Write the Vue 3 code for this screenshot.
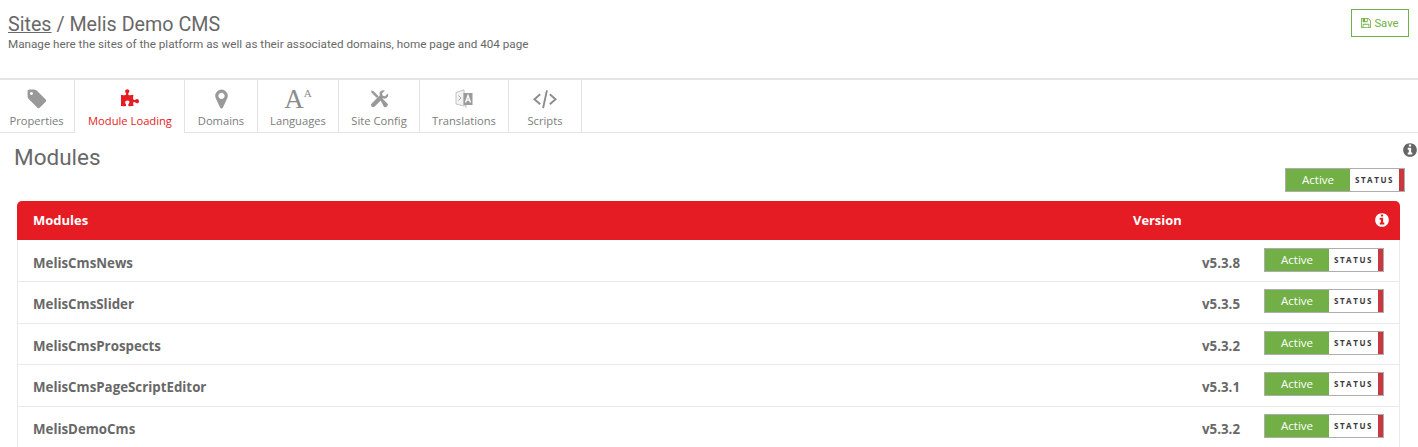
<script setup>
const INFO = 'M1024 1376v-160q0-14-9-23t-23-9h-96v-512q0-14-9-23t-23-9h-320q-14 0-23 9t-9 23v160q0 14 9 23t23 9h96v320h-96q-14 0-23 9t-9 23v160q0 14 9 23t23 9h448q14 0 23-9t9-23zm-128-896v-160q0-14-9-23t-23-9h-192q-14 0-23 9t-9 23v160q0 14 9 23t23 9h192q14 0 23-9t9-23zm640 416q0 209-103 385.5t-279.5 279.5-385.5 103-385.5-103-279.5-279.5-103-385.5 103-385.5 279.5-279.5 385.5-103 385.5 103 279.5 279.5 103 385.5z'
const tabs = [
  { key: 'tag', label: 'Properties', width: 75 },
  { key: 'puzzle', label: 'Module Loading', width: 110, active: true },
  { key: 'marker', label: 'Domains', width: 73 },
  { key: 'lang', label: 'Languages', width: 81 },
  { key: 'tools', label: 'Site Config', width: 81 },
  { key: 'trans', label: 'Translations', width: 89 },
  { key: 'code', label: 'Scripts', width: 73 },
]
const rows = [
  { name: 'MelisCmsNews', version: 'v5.3.8' },
  { name: 'MelisCmsSlider', version: 'v5.3.5' },
  { name: 'MelisCmsProspects', version: 'v5.3.2' },
  { name: 'MelisCmsPageScriptEditor', version: 'v5.3.1' },
  { name: 'MelisDemoCms', version: 'v5.3.2' },
]
</script>

<template>
  <div class="page">
    <header class="head">
      <div>
        <h1 class="title"><a class="crumb">Sites</a> / Melis Demo CMS</h1>
        <p class="sub">Manage here the sites of the platform as well as their associated domains, home page and 404 page</p>
      </div>
      <button class="save">
        <svg class="save-ic" viewBox="0 0 1536 1792"><path d="M384 1536h768v-384h-768v384zm896 0h128v-896q0-14-10-38.5t-20-34.5l-281-281q-10-10-34-20t-39-10v416q0 40-28 68t-68 28h-576q-40 0-68-28t-28-68v-416h-128v1280h128v-416q0-40 28-68t68-28h832q40 0 68 28t28 68v416zm-384-928v-320q0-13-9.500-22.500t-22.500-9.500h-192q-13 0-22.500 9.500t-9.500 22.500v320q0 13 9.500 22.500t22.500 9.500h192q13 0 22.500-9.500t9.500-22.500zm640 32v928q0 40-28 68t-68 28h-1344q-40 0-68-28t-28-68v-1344q0-40 28-68t68-28h928q40 0 88 20t76 48l280 280q28 28 48 76t20 88z"/></svg>
        Save
      </button>
    </header>

    <nav class="tabs">
      <div v-for="t in tabs" :key="t.key" class="tab" :class="{ on: t.active }" :style="{ width: t.width + 'px' }">
        <span class="ic">
          <svg v-if="t.key === 'tag'" width="20" height="22" viewBox="0 0 1536 1792"><path d="M448 448q0-53-37.500-90.500t-90.500-37.500-90.500 37.500-37.500 90.500 37.500 90.500 90.500 37.500 90.500-37.500 37.500-90.500zm1067 576q0 53-37 90l-491 492q-39 37-91 37-53 0-90-37l-715-716q-38-37-64.500-101t-26.500-117v-416q0-52 38-90t90-38h416q53 0 117 26.500t102 64.500l715 714q37 39 37 91z"/></svg>
          <svg v-else-if="t.key === 'puzzle'" width="18" height="20" viewBox="0 0 1664 1792"><path d="M1664 1098q0 81-44.500 135t-123.500 54q-41 0-77.500-17.500t-59-38-56.500-38-71-17.500q-110 0-110 124 0 39 16 115t15 115v5q-22 0-33 1-34 3-97.500 11.500t-115.500 13.500-98 5q-61 0-103-26.500t-42-83.500q0-37 17.500-71t38-56.500 38-59 17.500-77.500q0-79-54-123.500t-135-44.500q-84 0-143 45.500t-59 127.500q0 43 15 83t33.500 64.500 33.500 53 15 50.500q0 45-46 89-37 35-117 35-95 0-245-24-9-2-27.500-4t-27.500-4l-13-2q-1 0-3-1-2 0-2-1v-1024q2 1 17.500 3.500t34 5 21.500 3.500q150 24 245 24 80 0 117-35 46-44 46-89 0-22-15-50.500t-33.500-53-33.500-64.500-15-83q0-82 59-127.500t144-45.500q80 0 134 44.500t54 123.500q0 41-17.500 77.500t-38 59-38 56.500-17.500 71q0 57 42 83.500t103 26.500q64 0 180-15t163-17v2q-1 2-3.500 17.500t-5 34-3.500 21.500q-24 150-24 245 0 80 35 117 44 46 89 46 22 0 50.500-15t53-33.500 64.500-33.500 83-15q82 0 127.500 59t45.500 143z"/></svg>
          <svg v-else-if="t.key === 'marker'" width="13" height="22" viewBox="0 0 1024 1792"><path d="M768 640q0-106-75-181t-181-75-181 75-75 181 75 181 181 75 181-75 75-181zm256 0q0 109-33 179l-364 774q-16 33-47.500 52t-67.500 19-67.500-19-46.500-52l-365-774q-33-70-33-179 0-212 150-362t362-150 362 150 150 362z"/></svg>
          <span v-else-if="t.key === 'lang'" class="lang"><span class="big">A</span><span class="small">A</span></span>
          <svg v-else-if="t.key === 'tools'" width="19" height="18" viewBox="0 0 20 20">
            <path d="M3.200 1.200 9 7l-1.900 1.900L1.300 3l-.7-2.400z"/>
            <path d="M10.800 10.800l1.900-1.900 6 6c.8.8.8 2 0 2.800l-1 1c-.8.8-2 .8-2.800 0z"/>
            <path d="M19.300 3.800l-3.200 3.100-2.600-.6-.6-2.600L16 .6c-2.300-.8-4.700 0-5.600 2-.5 1.200-.4 2.400 0 3.300L1.300 15c-1 1-1 2.400 0 3.400s2.400 1 3.400 0l9.200-9.100c1 .4 2.200.4 3.300 0 2-1 2.900-3.300 2.100-5.500z"/>
          </svg>
          <svg v-else-if="t.key === 'trans'" width="18" height="20" viewBox="0 0 18 20">
            <path d="M1 3.500 9 .8V17L1 15z" fill="#f2f2f2" stroke="#c4c4c4" stroke-width="1"/>
            <path d="M8.500 4H17.500V16H8.500z" fill="#9a9a9a"/>
            <path d="M10.500 13.500 13 6.500 15.500 13.500M11.300 11.200h3.400" fill="none" stroke="#fff" stroke-width="1.300"/>
            <path d="M3.500 6.500 6 9 3.500 11.500" fill="none" stroke="#aaa" stroke-width="1"/>
            <path d="M9 16.500 11.500 19.500V16z" fill="#c4c4c4"/>
          </svg>
          <svg v-else width="24" height="20" viewBox="0 0 25 20" fill="none">
            <path d="M7.500 5 1.500 10.200 7.500 15.500M17.500 5l6 5.200-6 5.200M14.500 1 10.500 19.500" fill="none" stroke="#8c8c8c" stroke-width="2"/>
          </svg>
        </span>
        <span class="lbl">{{ t.label }}</span>
      </div>
    </nav>

    <section class="body">
      <svg class="help" viewBox="0 0 1536 1792"><path :d="INFO"/></svg>
      <div class="title-row">
        <h2 class="mods">Modules</h2>
        <div class="toggle top">
          <span class="on-part">Active</span><span class="mid">STATUS</span><span class="off"></span>
        </div>
      </div>

      <div class="table">
        <div class="thead">
          <span class="c-name">Modules</span>
          <span class="c-ver">Version</span>
          <svg class="th-info" viewBox="0 0 1536 1792"><path :d="INFO"/></svg>
        </div>
        <div v-for="r in rows" :key="r.name" class="row">
          <span class="c-name">{{ r.name }}</span>
          <span class="r-ver">{{ r.version }}</span>
          <div class="toggle">
            <span class="on-part">Active</span><span class="mid">STATUS</span><span class="off"></span>
          </div>
        </div>
      </div>
    </section>
  </div>
</template>

<style>
html, body { margin: 0; background: #fff; overflow: hidden; }
</style>

<style scoped>
.page { width: 1418px; height: 447px; overflow: hidden; font-family: "Open Sans", sans-serif; color: #686868; }
.head { height: 80px; box-sizing: border-box; padding: 9px 9px 0 8px; display: flex; justify-content: space-between; align-items: flex-start; border-bottom: 2px solid #e4e4e4; }
.title { margin: 4px 0 0; font: 400 19.700px/24px Roboto, sans-serif; color: #686868; }
.crumb { text-decoration: underline; }
.sub { margin: 0; font: 400 11.700px/15px Roboto, sans-serif; color: #686868; }
.save { box-sizing: border-box; width: 58px; height: 28px; margin: 0; padding: 0; background: #fff; border: 1px solid #72af46; color: #72af46; font: 400 11.300px Roboto, sans-serif; display: flex; align-items: center; justify-content: center; gap: 3px; }
.save-ic { width: 10px; height: 12px; fill: #72af46; }
.tabs { display: flex; height: 53px; box-sizing: border-box; border-bottom: 1px solid #e4e4e4; }
.tab { box-sizing: border-box; height: 53px; border-right: 1px solid #e4e4e4; display: flex; flex-direction: column; align-items: center; font-size: 11.200px; color: #7c7c7c; }
.tab:first-child { padding-right: 1px; }
.tab.on { color: #e61c24; background: #fff; padding-left: 1px; }
.ic { height: 32px; display: flex; align-items: center; justify-content: center; padding-top: 6px; box-sizing: border-box; }
.ic svg { fill: #999; display: block; }
.on .ic svg { fill: #e61c24; }
.lbl { margin-top: 1px; line-height: 16px; white-space: nowrap; }
.lang { display: flex; align-items: flex-start; color: #8c8c8c; font-family: "Liberation Serif", serif; height: 24px; }
.big { font-size: 27px; line-height: 24px; }
.small { font-size: 11px; line-height: 12px; }
.body { position: relative; padding: 0 17px; }
.help { position: absolute; right: 1px; top: 9px; width: 14px; height: 16px; fill: #666; }
.title-row { height: 68px; position: relative; display: flex; justify-content: space-between; }
.mods { margin: 11px 0 0 -3px; font: 400 22.500px/26px Roboto, sans-serif; color: #686868; }
.toggle { box-sizing: border-box; width: 120px; height: 24px; border: 1px solid #adadad; display: flex; flex: none; }
.toggle.top { position: absolute; right: -4px; top: 35px; }
.on-part { width: 64px; background: #72af46; color: #fff; font-size: 11.500px; line-height: 22px; text-align: center; }
.mid { width: 49px; background: #fff; color: #3a3a3a; font-weight: 700; font-size: 8px; letter-spacing: 1.600px; line-height: 22px; text-align: center; }
.off { width: 5px; background: #c8383e; }
.table { width: 1383px; box-sizing: border-box; border: 1px solid #eaeaea; border-top: 0; border-radius: 5px 5px 0 0; }
.thead { margin: 0 -1px .6px; height: 39px; background: #e61c24; color: #fff; display: flex; align-items: center; padding-bottom: 2px; box-sizing: border-box; border-radius: 5px 5px 0 0; position: relative; font-weight: 700; font-size: 13px; }
.c-name { font-weight: 700; font-size: 13.300px; margin: 0 0 0 15px; position: relative; top: 3px; }
.thead .c-name { font-size: 13px; margin-left: 16px; top: 0; }
.c-ver { position: absolute; left: 1116px; font-size: 12.900px; }
.th-info { position: absolute; right: 11px; top: 11px; width: 14px; height: 16px; fill: #fff; }
.row { height: 41.500px; box-sizing: border-box; border-bottom: 1px solid #eaeaea; display: flex; align-items: center; position: relative; justify-content: space-between; padding: 0 15px 2px 0; }
.r-ver { position: absolute; right: 159px; top: 13px; font-weight: 700; font-size: 13.300px; }
</style>
